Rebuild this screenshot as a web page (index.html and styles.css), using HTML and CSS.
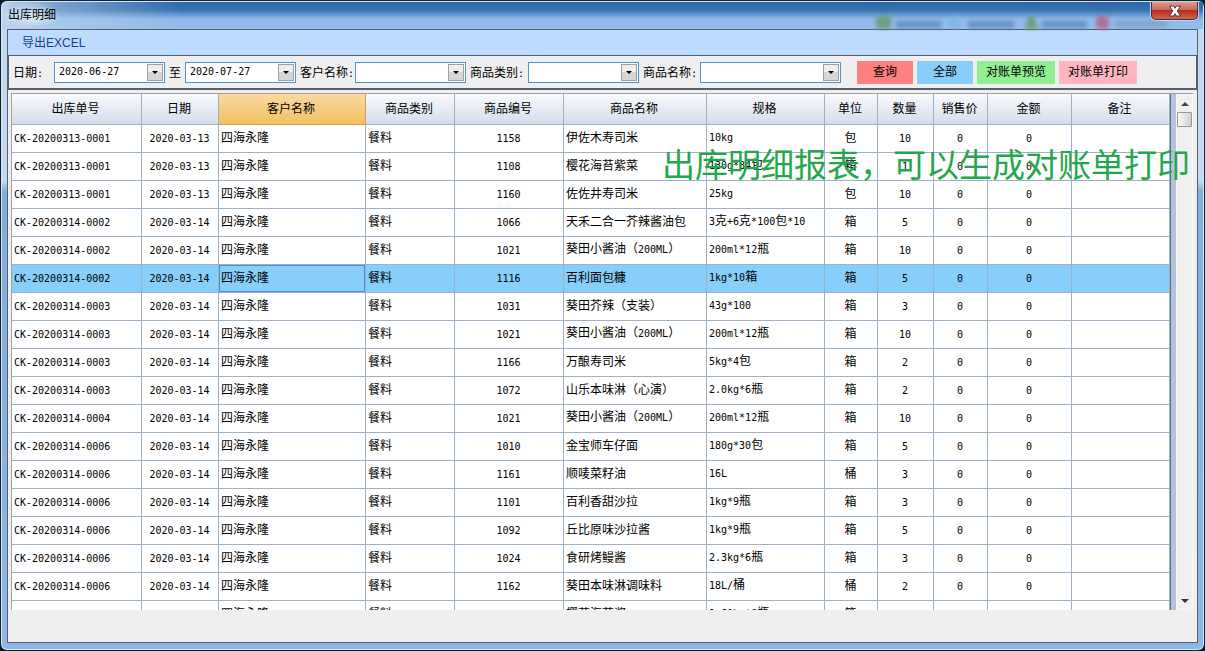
FILE: index.html
```html
<!DOCTYPE html>
<html lang="zh-CN">
<head>
<meta charset="utf-8">
<title>出库明细</title>
<link rel="stylesheet" href="styles.css">
</head>
<body>
<div class="window">
  <header class="titlebar">
    <svg class="glass" width="300" height="26" viewBox="0 0 300 26" aria-hidden="true">
      <g fill="#5f9550"><rect x="6" y="13" width="15" height="13" rx="3"/><path d="M155 26l3-13h6l4 13z"/></g>
      <rect x="226" y="13" width="13" height="13" rx="5" fill="#b8506c"/>
      <g fill="#5480b6"><rect x="26" y="18" width="45" height="7"/><rect x="98" y="18" width="46" height="7"/><rect x="172" y="18" width="45" height="7"/></g>
      <rect x="245" y="18" width="52" height="6" fill="#7797c0"/>
      <rect x="80" y="13" width="9" height="12" fill="#78b4e0"/>
    </svg>
    <h1 class="title">出库明细</h1>
    <button class="close" type="button" aria-label="关闭">
      <svg width="14" height="12" viewBox="0 0 14 12"><path d="M1.500 1h4L7 3.300 8.500 1h4L9.300 6l3.200 5h-4L7 8.700 5.500 11h-4l3.200-5z" fill="#fff" stroke="#5b3540" stroke-width="1"/></svg>
    </button>
  </header>
  <main class="client">
    <nav class="menu"><a class="menu-item" href="#">导出EXCEL</a></nav>
    <form class="filters">
      <label for="from">日期<span class="n">:</span></label>
      <span class="combo"><input id="from" type="text" value="2020-06-27"><button class="drop" type="button" aria-label="选择开始日期"></button></span>
      <label for="to">至</label>
      <span class="combo"><input id="to" type="text" value="2020-07-27"><button class="drop" type="button" aria-label="选择结束日期"></button></span>
      <label for="customer">客户名称<span class="n">:</span></label>
      <span class="combo"><input id="customer" type="text"><button class="drop" type="button" aria-label="选择客户"></button></span>
      <label for="category">商品类别<span class="n">:</span></label>
      <span class="combo"><input id="category" type="text"><button class="drop" type="button" aria-label="选择类别"></button></span>
      <label for="product">商品名称<span class="n">:</span></label>
      <span class="combo"><input id="product" type="text"><button class="drop" type="button" aria-label="选择商品"></button></span>
      <div class="actions">
        <button class="action query" type="button">查询</button>
        <button class="action all" type="button">全部</button>
        <button class="action preview" type="button">对账单预览</button>
        <button class="action print" type="button">对账单打印</button>
      </div>
    </form>
    <section class="grid">
      <div class="rows">
        <table>
          <colgroup><col class="c-no"><col class="c-date"><col class="c-cust"><col class="c-cat"><col class="c-code"><col class="c-name"><col class="c-spec"><col class="c-unit"><col class="c-qty"><col class="c-price"><col class="c-sum"><col></colgroup>
          <thead><tr><th>出库单号</th><th>日期</th><th class="sorted">客户名称</th><th>商品类别</th><th>商品编号</th><th>商品名称</th><th>规格</th><th>单位</th><th>数量</th><th>销售价</th><th>金额</th><th>备注</th></tr></thead>
          <tbody>
            <tr><td>CK-20200313-0001</td><td>2020-03-13</td><td>四海永隆</td><td>餐料</td><td>1158</td><td>伊佐木寿司米</td><td><span class="n">10kg</span></td><td>包</td><td>10</td><td>0</td><td>0</td><td></td></tr>
            <tr><td>CK-20200313-0001</td><td>2020-03-13</td><td>四海永隆</td><td>餐料</td><td>1108</td><td>樱花海苔紫菜</td><td><span class="n">130g*84</span>包</td><td>箱</td><td>1</td><td>0</td><td>0</td><td></td></tr>
            <tr><td>CK-20200313-0001</td><td>2020-03-13</td><td>四海永隆</td><td>餐料</td><td>1160</td><td>佐佐井寿司米</td><td><span class="n">25kg</span></td><td>包</td><td>10</td><td>0</td><td>0</td><td></td></tr>
            <tr><td>CK-20200314-0002</td><td>2020-03-14</td><td>四海永隆</td><td>餐料</td><td>1066</td><td>天禾二合一芥辣酱油包</td><td><span class="n">3</span>克<span class="n">+6</span>克<span class="n">*100</span>包<span class="n">*10</span></td><td>箱</td><td>5</td><td>0</td><td>0</td><td></td></tr>
            <tr><td>CK-20200314-0002</td><td>2020-03-14</td><td>四海永隆</td><td>餐料</td><td>1021</td><td>葵田小酱油（<span class="n">200ML</span>）</td><td><span class="n">200ml*12</span>瓶</td><td>箱</td><td>10</td><td>0</td><td>0</td><td></td></tr>
            <tr class="selected"><td>CK-20200314-0002</td><td>2020-03-14</td><td class="focused">四海永隆</td><td>餐料</td><td>1116</td><td>百利面包糠</td><td><span class="n">1kg*10</span>箱</td><td>箱</td><td>5</td><td>0</td><td>0</td><td></td></tr>
            <tr><td>CK-20200314-0003</td><td>2020-03-14</td><td>四海永隆</td><td>餐料</td><td>1031</td><td>葵田芥辣（支装）</td><td><span class="n">43g*100</span></td><td>箱</td><td>3</td><td>0</td><td>0</td><td></td></tr>
            <tr><td>CK-20200314-0003</td><td>2020-03-14</td><td>四海永隆</td><td>餐料</td><td>1021</td><td>葵田小酱油（<span class="n">200ML</span>）</td><td><span class="n">200ml*12</span>瓶</td><td>箱</td><td>10</td><td>0</td><td>0</td><td></td></tr>
            <tr><td>CK-20200314-0003</td><td>2020-03-14</td><td>四海永隆</td><td>餐料</td><td>1166</td><td>万酿寿司米</td><td><span class="n">5kg*4</span>包</td><td>箱</td><td>2</td><td>0</td><td>0</td><td></td></tr>
            <tr><td>CK-20200314-0003</td><td>2020-03-14</td><td>四海永隆</td><td>餐料</td><td>1072</td><td>山乐本味淋（心演）</td><td><span class="n">2.0kg*6</span>瓶</td><td>箱</td><td>2</td><td>0</td><td>0</td><td></td></tr>
            <tr><td>CK-20200314-0004</td><td>2020-03-14</td><td>四海永隆</td><td>餐料</td><td>1021</td><td>葵田小酱油（<span class="n">200ML</span>）</td><td><span class="n">200ml*12</span>瓶</td><td>箱</td><td>10</td><td>0</td><td>0</td><td></td></tr>
            <tr><td>CK-20200314-0006</td><td>2020-03-14</td><td>四海永隆</td><td>餐料</td><td>1010</td><td>金宝师车仔面</td><td><span class="n">180g*30</span>包</td><td>箱</td><td>5</td><td>0</td><td>0</td><td></td></tr>
            <tr><td>CK-20200314-0006</td><td>2020-03-14</td><td>四海永隆</td><td>餐料</td><td>1161</td><td>顺唛菜籽油</td><td><span class="n">16L</span></td><td>桶</td><td>3</td><td>0</td><td>0</td><td></td></tr>
            <tr><td>CK-20200314-0006</td><td>2020-03-14</td><td>四海永隆</td><td>餐料</td><td>1101</td><td>百利香甜沙拉</td><td><span class="n">1kg*9</span>瓶</td><td>箱</td><td>3</td><td>0</td><td>0</td><td></td></tr>
            <tr><td>CK-20200314-0006</td><td>2020-03-14</td><td>四海永隆</td><td>餐料</td><td>1092</td><td>丘比原味沙拉酱</td><td><span class="n">1kg*9</span>瓶</td><td>箱</td><td>5</td><td>0</td><td>0</td><td></td></tr>
            <tr><td>CK-20200314-0006</td><td>2020-03-14</td><td>四海永隆</td><td>餐料</td><td>1024</td><td>食研烤鳗酱</td><td><span class="n">2.3kg*6</span>瓶</td><td>箱</td><td>3</td><td>0</td><td>0</td><td></td></tr>
            <tr><td>CK-20200314-0006</td><td>2020-03-14</td><td>四海永隆</td><td>餐料</td><td>1162</td><td>葵田本味淋调味料</td><td><span class="n">18L/</span>桶</td><td>桶</td><td>2</td><td>0</td><td>0</td><td></td></tr>
            <tr><td></td><td></td><td>四海永隆</td><td>餐料</td><td></td><td>樱花海苔酱</td><td><span class="n">1.60kg*8</span>瓶</td><td>箱</td><td></td><td></td><td></td><td></td></tr>
          </tbody>
        </table>
      </div>
      <div class="scroll">
        <button class="arrow" type="button" aria-label="向上滚动"><svg width="8" height="4" viewBox="0 0 8 4"><path d="M0 4L4 0l4 4z" fill="#444"/></svg></button>
        <div class="thumb"></div>
        <button class="arrow down" type="button" aria-label="向下滚动"><svg width="8" height="4" viewBox="0 0 8 4"><path d="M0 0h8L4 4z" fill="#333"/></svg></button>
      </div>
      <p class="note">出库明细报表，可以生成对账单打印</p>
    </section>
    <footer class="status"></footer>
  </main>
</div>
</body>
</html>
```
FILE: styles.css
```css
* { box-sizing: border-box; }
body {
  margin: 0;
  background: #101c2c;
  color: #000;
  font: 12px/16px "Liberation Sans", "Noto Sans CJK SC", sans-serif;
}
button, input { font: inherit; color: inherit; }
.n { font-family: "DejaVu Sans Mono", monospace; font-size: 10px; }

.window {
  position: relative;
  display: flex;
  flex-direction: column;
  height: 100vh;
  padding: 0 6px 7px;
  border: 1px solid #15202f;
  border-radius: 7px;
  background: linear-gradient(#c5daf0 0 180px, #82addc 190px, #8fb6e4);
  box-shadow: inset 0 0 0 1px #d5e8fa;
  overflow: hidden;
}
.titlebar {
  display: flex;
  justify-content: space-between;
  align-items: flex-start;
  height: 27px;
  margin: 1px -5px 0;
  padding: 0 5px 0 0;
  background: linear-gradient(90deg, #bcd4ee 0, #bcd4ee88 50px, #bcd4ee00 180px), linear-gradient(#2d68a6 0, #3572b0 8px, #8fbaea 17px, #93bceb);
}
.title {
  margin: 0;
  padding: 5px 6px;
  border-radius: 10px;
  background: radial-gradient(closest-side, #ffffffaa, #ffffff00);
  font-size: 12px;
  line-height: 16px;
  font-weight: 400;
}
.glass { position: absolute; right: 34px; top: 2px; filter: blur(2px); opacity: 0.7; }
.close {
  position: relative;
  display: flex;
  align-items: center;
  justify-content: center;
  width: 47px;
  height: 18px;
  padding: 0;
  border: 1px solid #4c2a3a;
  border-top: 0;
  border-radius: 0 0 5px 5px;
  background: linear-gradient(#dc9c90 0, #cc6a5a 45%, #b52c1b 50%, #cf6750);
  box-shadow: 0 0 0 1px #c3d5e8;
}

.client {
  flex: 1;
  min-height: 0;
  display: flex;
  flex-direction: column;
  border: 1px solid #555f6d;
  background: #efefef;
}
.menu { height: 25px; padding: 5px 14px; background: #bfdbff; }
.menu-item { color: #15428b; text-decoration: none; }
.filters {
  display: grid;
  grid-template-columns: 45px 111px 20px 111px 59px 111px 62px 111px 61px 141px auto;
  align-items: center;
  height: 35px;
  border: 1px solid #555f6d;
  border-width: 1px 1px 2px;
}
.filters label { padding: 2px 0 0 4px; white-space: nowrap; }
.combo {
  display: flex;
  height: 21px;
  padding: 1px;
  border: 1px solid #4a94d0;
  background: #fff;
}
.combo input {
  flex: 1;
  min-width: 0;
  padding: 0 3px;
  border: 0;
  outline: 0;
  background: none;
  font: 10px/16px "DejaVu Sans Mono", monospace;
}
.drop {
  width: 16px;
  padding: 0;
  border: 1px solid #a0a0a0;
  background: linear-gradient(#eee 0 50%, #d5d5d5 50%);
}
.drop::before {
  content: "";
  display: block;
  width: 0;
  margin: 0 auto;
  border: 3px solid transparent;
  border-top-color: #000;
  border-bottom: 0;
}
.actions { display: flex; gap: 4px; padding-left: 16px; }
.action { height: 23px; padding: 0 9px; border: 0; white-space: nowrap; }
.query, .all { padding: 0 16px; }
.query { background: #ff8080; }
.all { background: #87cefa; }
.preview { background: #90ee90; }
.print { background: #ffb6c1; }

.grid {
  position: relative;
  flex: 1;
  min-height: 0;
  display: flex;
  margin: 3px 4px 0 3px;
  border: 1px solid #a0a0a0;
  border-width: 1px 0 0 1px;
  background: #b0c4de;
}
.rows { flex: 1; min-width: 0; overflow: hidden; border-right: 1px solid #5c7186; background: #fff; }
table { width: 100%; table-layout: fixed; border-collapse: separate; border-spacing: 0; }
.c-no { width: 130px; }
.c-date { width: 77px; }
.c-cust { width: 147px; }
.c-cat { width: 89px; }
.c-code { width: 109px; }
.c-name { width: 143px; }
.c-spec { width: 118px; }
.c-unit { width: 53px; }
.c-qty { width: 56px; }
.c-price { width: 54px; }
.c-sum { width: 84px; }
th, td { border: 0 solid #9db2c8; border-width: 0 1px 1px 0; white-space: nowrap; overflow: hidden; }
th {
  height: 31px;
  padding: 0 2px 0 0;
  background: linear-gradient(#f8fafd, #d5dcec);
  font-weight: 400;
}
th.sorted { border-color: #e09a4a; background: linear-gradient(#fbd9a2, #f2c060); }
td { height: 28px; padding: 0 3px 2px 2px; text-align: center; }
td:nth-child(3), td:nth-child(4), td:nth-child(6), td:nth-child(7) { text-align: left; }
td:nth-child(1), td:nth-child(2), td:nth-child(5), td:nth-child(n+9) {
  padding-bottom: 0;
  font-family: "DejaVu Sans Mono", monospace;
  font-size: 10px;
}
td:nth-child(1) { text-align: left; }
.selected td { background: #87cefa; }
.selected .focused { box-shadow: inset 0 0 0 1px #4a8bdc; }

.scroll {
  display: flex;
  flex-direction: column;
  width: 17px;
  margin-left: 5px;
  border: 1px solid #f8f8f8;
  background: #f0f0f0;
}
.arrow {
  display: flex;
  align-items: center;
  justify-content: center;
  height: 17px;
  padding: 0;
  border: 0;
  background: none;
}
.down { margin-top: auto; }
.thumb { height: 15px; border: 1px solid #969696; border-radius: 1px; background: linear-gradient(90deg, #fafafa, #d0d0d4); }
.note {
  position: absolute;
  top: 45px;
  right: 3px;
  margin: 0;
  color: #22a84a;
  font: 33px/48px "Noto Sans CJK SC", sans-serif;
  white-space: nowrap;
}
.status { height: 32px; }
```
